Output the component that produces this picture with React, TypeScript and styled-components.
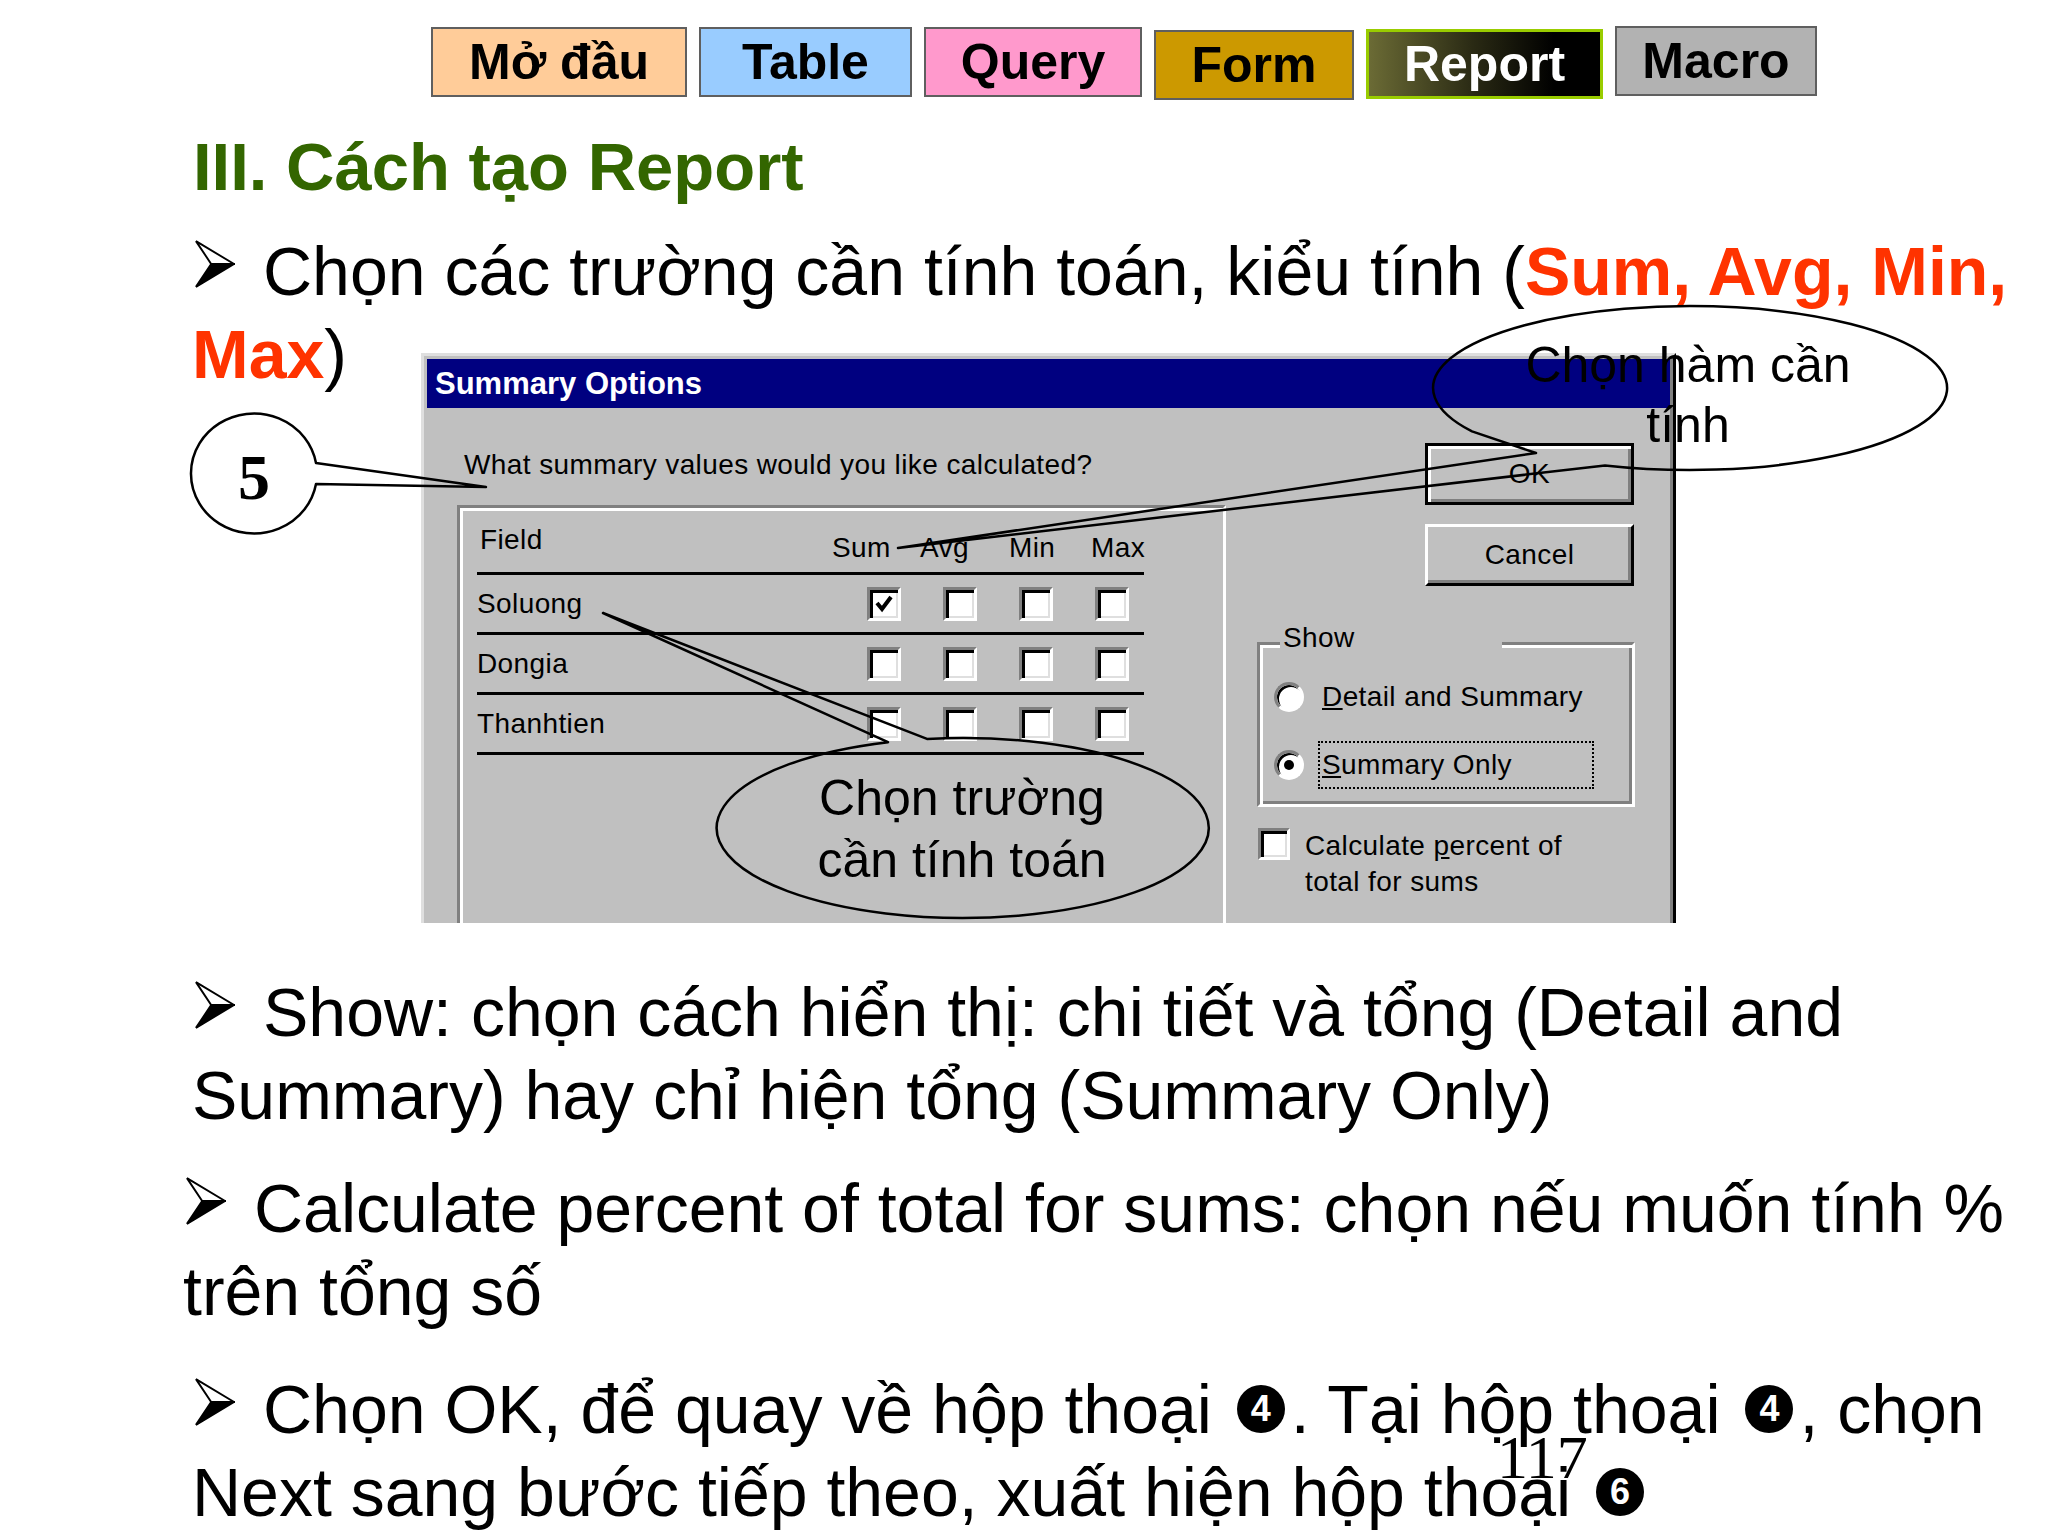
import React from "react";
import styled, { createGlobalStyle } from "styled-components";

const GlobalStyle = createGlobalStyle`
  html, body {
    margin: 0;
    padding: 0;
    background: #fff;
  }
  body {
    overflow: hidden;
  }
`;

type Tab = {
  label: string;
  width: number;
  top: number;
  bg: string;
  fg?: string;
  active?: boolean;
};

const TABS: Array<Tab> = [
  { label: "Mở đầu", width: 256, top: 27, bg: "#ffcc99" },
  { label: "Table", width: 213, top: 27, bg: "#99ccff" },
  { label: "Query", width: 218, top: 27, bg: "#ff99cc" },
  { label: "Form", width: 200, top: 30, bg: "#cc9900" },
  {
    label: "Report",
    width: 237,
    top: 29,
    bg: "linear-gradient(90deg, #6b6b35 0%, #2a2a14 45%, #000 80%)",
    fg: "#fff",
    active: true,
  },
  { label: "Macro", width: 202, top: 26, bg: "#b2b2b2" },
];

const FIELDS = [
  { name: "Soluong", checked: [true, false, false, false] },
  { name: "Dongia", checked: [false, false, false, false] },
  { name: "Thanhtien", checked: [false, false, false, false] },
];

const Arrow: React.FC = () => (
  <ArrowIcon viewBox="-1 -1 42 50" width={40} height={48}>
    <polygon
      points="0,0 40,24 16,24"
      fill="#fff"
      stroke="#000"
      strokeWidth={2}
      strokeLinejoin="miter"
    />
    <polygon
      points="16,24 40,24 0,48"
      fill="#000"
      stroke="#000"
      strokeWidth={2}
    />
  </ArrowIcon>
);

const Check: React.FC<{ checked?: boolean; size?: number }> = ({
  checked,
  size,
}) => (
  <CheckBox $size={size}>
    {checked && (
      <svg width={20} height={20} viewBox="0 0 20 20">
        <path
          d="M3 9 L8 15 L17 3"
          fill="none"
          stroke="#000"
          strokeWidth={4}
          strokeLinejoin="miter"
        />
      </svg>
    )}
  </CheckBox>
);

const App: React.FC = () => {
  return (
    <Slide>
      <GlobalStyle />

      <TabBar>
        {TABS.map((tab) => (
          <TabButton
            key={tab.label}
            $width={tab.width}
            $top={tab.top}
            $bg={tab.bg}
            $fg={tab.fg}
            $active={tab.active}
          >
            {tab.label}
          </TabButton>
        ))}
      </TabBar>

      <Title>III. Cách tạo Report</Title>

      <Bullet $gap={30} $shift={192}>
        <Arrow />
        Chọn các trường cần tính toán, kiểu tính (
        <Hot>Sum, Avg, Min,</Hot>
        <br />
        <Hot>Max</Hot>)
      </Bullet>

      <Figure>
        <Dialog>
          <TitleBar>Summary Options</TitleBar>
          <DialogBody>
            <LeftColumn>
              <Prompt>What summary values would you like calculated?</Prompt>
              <FieldBox>
                <HeaderRow>
                  <FieldHead>Field</FieldHead>
                  <ColHead>Sum</ColHead>
                  <ColHead>Avg</ColHead>
                  <ColHead>Min</ColHead>
                  <ColHead>Max</ColHead>
                </HeaderRow>
                {FIELDS.map((field) => (
                  <FieldRow key={field.name}>
                    <span>{field.name}</span>
                    {field.checked.map((value, i) => (
                      <Check key={i} checked={value} />
                    ))}
                  </FieldRow>
                ))}
              </FieldBox>
            </LeftColumn>

            <RightColumn>
              <WinButton $default>OK</WinButton>
              <WinButton>Cancel</WinButton>

              <ShowGroup>
                <Legend>Show</Legend>
                <RadioRow>
                  <Radio />
                  <RadioLabel>
                    <u>D</u>etail and Summary
                  </RadioLabel>
                </RadioRow>
                <RadioRow>
                  <Radio $checked />
                  <RadioLabel $focus>
                    <u>S</u>ummary Only
                  </RadioLabel>
                </RadioRow>
              </ShowGroup>

              <CalcRow>
                <Check size={32} />
                <CalcLabel>
                  Calculate <u>p</u>ercent of
                  <br />
                  total for sums
                </CalcLabel>
              </CalcRow>
            </RightColumn>
          </DialogBody>
        </Dialog>
      </Figure>

      <Bullet $gap={48} $shift={192}>
        <Arrow />
        Show: chọn cách hiển thị: chi tiết và tổng (Detail and
        <br />
        Summary) hay chỉ hiện tổng (Summary Only)
      </Bullet>

      <Bullet $gap={30} $shift={183}>
        <Arrow />
        Calculate percent of total for sums: chọn nếu muốn tính %
        <br />
        trên tổng số
      </Bullet>

      <Bullet $gap={35} $shift={192}>
        <Arrow />
        Chọn OK, để quay về hộp thoại <CircledNum>4</CircledNum>. Tại hộp thoại{" "}
        <CircledNum>4</CircledNum>, chọn
        <br />
        Next sang bước tiếp theo, xuất hiện hộp thoại <CircledNum>6</CircledNum>
      </Bullet>

      <Callouts viewBox="0 0 2048 1536" width={2048} height={1536}>
        <path d="M 316 463 A 63 60 0 1 0 316 484 L 486 487 Z" />
        <path d="M 1605 465.4 A 257 82 0 1 0 1472 431.4 L 1536 453 L 898 548 Z" />
        <path d="M 927 738.9 A 246 90 0 1 1 888 742.2 L 603 613 Z" />
      </Callouts>

      <StepNumber>5</StepNumber>
      <CalloutText $left={1488} $top={335} $width={400} $lh={60}>
        Chọn hàm cần
        <br />
        tính
      </CalloutText>
      <CalloutText $left={762} $top={767} $width={400} $lh={62}>
        Chọn trường
        <br />
        cần tính toán
      </CalloutText>

      <PageNumber>117</PageNumber>
    </Slide>
  );
};

export default App;

const Slide = styled.div`
  position: relative;
  width: 2048px;
  height: 1536px;
  overflow: hidden;
  background: #fff;
  color: #000;
  font-family: "Liberation Sans", Arial, sans-serif;
`;

const TabBar = styled.div`
  display: flex;
  align-items: flex-start;
  gap: 12px;
  height: 100px;
  padding-left: 431px;
`;

const TabButton = styled.div<{
  $width: number;
  $top: number;
  $bg: string;
  $fg?: string;
  $active?: boolean;
}>`
  box-sizing: border-box;
  display: flex;
  align-items: center;
  justify-content: center;
  width: ${(p) => p.$width}px;
  height: 70px;
  margin-top: ${(p) => p.$top}px;
  background: ${(p) => p.$bg};
  color: ${(p) => p.$fg ?? "#000"};
  border: ${(p) => (p.$active ? "3px solid #99cc00" : "2px solid #5f5f5f")};
  font-size: 50px;
  font-weight: bold;
  line-height: 1;
`;

const Title = styled.h1`
  margin: 33px 0 0;
  padding-left: 193px;
  font-size: 67px;
  line-height: 67px;
  font-weight: bold;
  color: #336600;
`;

const Bullet = styled.p<{ $gap: number; $shift: number }>`
  margin: ${(p) => p.$gap}px 0 0;
  padding-left: ${(p) => p.$shift}px;
  font-size: 68px;
  line-height: 83px;
  white-space: nowrap;
`;

const ArrowIcon = styled.svg`
  vertical-align: 7px;
  margin: 0 28px 0 3px;
`;

const Hot = styled.span`
  color: #ff3300;
  font-weight: bold;
`;

const CircledNum = styled.span`
  display: inline-block;
  width: 48px;
  height: 48px;
  margin: 0 6px;
  border-radius: 50%;
  background: #000;
  color: #fff;
  font-size: 36px;
  font-weight: bold;
  line-height: 48px;
  text-align: center;
  vertical-align: 12px;
`;

const Figure = styled.div`
  margin-top: -43px;
  height: 570px;
  padding-left: 421px;
`;

const Dialog = styled.div`
  box-sizing: border-box;
  display: flex;
  flex-direction: column;
  width: 1255px;
  height: 570px;
  padding: 3px 3px 0 3px;
  background: #c0c0c0;
  border-top: 3px solid #dfdfdf;
  border-left: 3px solid #dfdfdf;
  border-right: 3px solid #000;
  box-shadow: inset -3px 0 0 #808080;
  overflow: hidden;
  font-size: 28px;
  line-height: 32px;
  letter-spacing: 0.4px;
`;

const TitleBar = styled.div`
  display: flex;
  align-items: center;
  height: 49px;
  padding-left: 8px;
  background: #000080;
  color: #fff;
  font-size: 31px;
  font-weight: bold;
  letter-spacing: 0;
`;

const DialogBody = styled.div`
  display: flex;
  flex: 1;
`;

const LeftColumn = styled.div`
  display: flex;
  flex-direction: column;
  width: 799px;
  padding: 41px 0 0 30px;
  box-sizing: border-box;
`;

const Prompt = styled.div`
  margin-left: 7px;
`;

const FieldBox = styled.div`
  flex: 1;
  margin-top: 24px;
  padding: 16px 0 0 17px;
  border-top: 3px solid #808080;
  border-left: 3px solid #808080;
  border-right: 3px solid #fff;
  box-shadow: inset 3px 3px 0 #fff;
`;

const HeaderRow = styled.div`
  display: grid;
  grid-template-columns: 355px 88px 89px 82px 1fr;
  width: 667px;
  padding-bottom: 8px;
  border-bottom: 3px solid #000;
`;

const FieldHead = styled.span`
  padding-left: 3px;
`;

const ColHead = styled.span`
  margin-top: 8px;
`;

const FieldRow = styled.div`
  display: grid;
  grid-template-columns: 390px 76px 76px 76px 49px;
  align-items: center;
  width: 667px;
  height: 57px;
  border-bottom: 3px solid #000;
`;

const CheckBox = styled.span<{ $size?: number }>`
  box-sizing: border-box;
  display: inline-flex;
  align-items: center;
  justify-content: center;
  width: ${(p) => p.$size ?? 34}px;
  height: ${(p) => p.$size ?? 34}px;
  background: #fff;
  border-style: solid;
  border-width: 3px;
  border-color: #808080 #fff #fff #808080;
  box-shadow: inset 3px 3px 0 #000, inset -2px -2px 0 #dfdfdf;
`;

const RightColumn = styled.div`
  display: flex;
  flex-direction: column;
  flex: 1;
  padding-top: 35px;
`;

const WinButton = styled.div<{ $default?: boolean }>`
  box-sizing: border-box;
  display: flex;
  align-items: center;
  justify-content: center;
  width: 209px;
  height: 62px;
  margin: ${(p) => (p.$default ? "0" : "19px")} 0 0 199px;
  border-style: solid;
  border-width: 3px;
  border-color: ${(p) =>
    p.$default ? "#000" : "#fff #000 #000 #fff"};
  box-shadow: ${(p) =>
    p.$default
      ? "inset 3px 3px 0 #fff, inset -3px -3px 0 #808080"
      : "inset -3px -3px 0 #808080"};
`;

const ShowGroup = styled.div`
  position: relative;
  box-sizing: border-box;
  width: 378px;
  height: 165px;
  margin: 56px 0 0 31px;
  padding: 28px 0 0 14px;
  border: 3px solid #808080;
  border-right-color: #fff;
  border-bottom-color: #fff;
  box-shadow: inset 3px 3px 0 #fff, inset -3px -3px 0 #808080;
`;

const Legend = styled.span`
  position: absolute;
  top: -23px;
  left: 20px;
  width: 219px;
  padding-left: 3px;
  background: #c0c0c0;
`;

const RadioRow = styled.div`
  display: flex;
  align-items: center;
  gap: 14px;
  & + & {
    margin-top: 20px;
  }
`;

const Radio = styled.span<{ $checked?: boolean }>`
  box-sizing: border-box;
  display: inline-flex;
  align-items: center;
  justify-content: center;
  width: 30px;
  height: 30px;
  border-radius: 50%;
  background: #fff;
  border: 3px solid;
  border-color: #808080 #fff #fff #808080;
  box-shadow: inset 2px 2px 0 #000;

  &::after {
    content: "";
    display: ${(p) => (p.$checked ? "block" : "none")};
    width: 10px;
    height: 10px;
    border-radius: 50%;
    background: #000;
  }
`;

const RadioLabel = styled.span<{ $focus?: boolean }>`
  box-sizing: border-box;
  width: ${(p) => (p.$focus ? "276px" : "auto")};
  padding: 6px 2px;
  border: 2px dotted ${(p) => (p.$focus ? "#000" : "transparent")};
`;

const CalcRow = styled.div`
  display: flex;
  align-items: flex-start;
  gap: 15px;
  margin: 21px 0 0 32px;
`;

const CalcLabel = styled.span`
  line-height: 36px;
`;

const Callouts = styled.svg`
  position: absolute;
  top: 0;
  left: 0;
  pointer-events: none;

  path {
    fill: none;
    stroke: #000;
    stroke-width: 2.5;
    stroke-linejoin: round;
  }
`;

const StepNumber = styled.div`
  position: absolute;
  left: 222px;
  top: 446px;
  width: 64px;
  text-align: center;
  font-family: "Liberation Serif", "Times New Roman", serif;
  font-size: 64px;
  font-weight: bold;
  line-height: 64px;
`;

const CalloutText = styled.div<{
  $left: number;
  $top: number;
  $width: number;
  $lh: number;
}>`
  position: absolute;
  left: ${(p) => p.$left}px;
  top: ${(p) => p.$top}px;
  width: ${(p) => p.$width}px;
  text-align: center;
  font-size: 50px;
  line-height: ${(p) => p.$lh}px;
`;

const PageNumber = styled.div`
  position: absolute;
  left: 1497px;
  top: 1426px;
  font-family: "Liberation Serif", "Times New Roman", serif;
  font-size: 62px;
  line-height: 62px;
`;
